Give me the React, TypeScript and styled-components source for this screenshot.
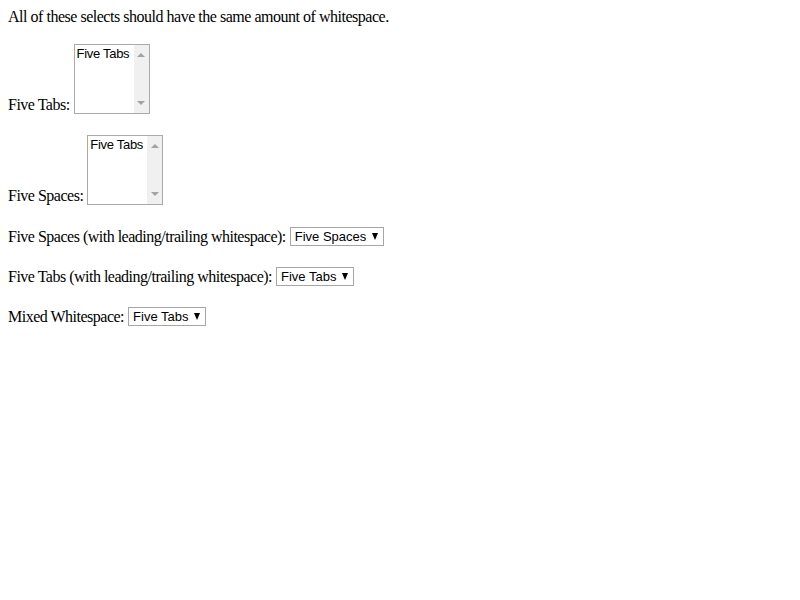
import React from "react";
import styled, { createGlobalStyle } from "styled-components";

const Global = createGlobalStyle`
  html, body { margin: 0; padding: 0; background: #fff; }
  body {
    padding: 8px;
    font-family: "Liberation Serif", "Times New Roman", serif;
    font-size: 16px;
    line-height: 18px;
    letter-spacing: -0.5px;
    color: #000;
  }
`;

const Intro = styled.div`
  height: 18px;
  letter-spacing: -0.48px;
`;

const Row = styled.div<{ $top: number; $align?: string }>`
  display: flex;
  align-items: ${(p) => p.$align || "flex-end"};
  margin-top: ${(p) => p.$top}px;
`;

const Label = styled.span`
  white-space: pre;
  margin-right: 4px;
`;

const ListBox = styled.div`
  box-sizing: border-box;
  width: 76px;
  height: 70px;
  border: 1px solid #a9a9a9;
  background: #fff;
  display: flex;
  font-family: "Liberation Sans", Arial, sans-serif;
  font-size: 13px;
  line-height: 15px;
  letter-spacing: -0.3px;
`;

const Options = styled.div`
  flex: 1;
  padding: 1px 0 0 2px;
  white-space: nowrap;
  overflow: hidden;
`;

const ScrollTrack = styled.div`
  width: 15px;
  background: #f0f0f0;
  display: flex;
  flex-direction: column;
  justify-content: space-between;
  align-items: center;
  padding: 8px 0 8px;
`;

const Arrow = styled.div<{ $up?: boolean }>`
  width: 0;
  height: 0;
  border-left: 4px solid transparent;
  border-right: 4px solid transparent;
  ${(p) =>
    p.$up
      ? "border-bottom: 4px solid #a3a3a3;"
      : "border-top: 4px solid #a3a3a3;"}
`;

const Drop = styled.div`
  box-sizing: border-box;
  height: 19px;
  border: 1px solid #a6a6a6;
  background: #fff;
  display: inline-flex;
  align-items: center;
  padding: 0 5px 0 4px;
  font-family: "Liberation Sans", Arial, sans-serif;
  font-size: 13px;
  line-height: 15px;
  letter-spacing: 0;
  white-space: nowrap;
`;

const Caret = styled.span`
  display: inline-block;
  width: 0;
  height: 0;
  margin-left: 6px;
  border-left: 3.5px solid transparent;
  border-right: 3.5px solid transparent;
  border-top: 7px solid #000;
`;

function List({ text }: { text: string }) {
  return (
    <ListBox>
      <Options>{text}</Options>
      <ScrollTrack>
        <Arrow $up />
        <Arrow />
      </ScrollTrack>
    </ListBox>
  );
}

function Select({ text }: { text: string }) {
  return (
    <Drop>
      {text}
      <Caret />
    </Drop>
  );
}

export default function App() {
  return (
    <>
      <Global />
      <Intro>All of these selects should have the same amount of whitespace.</Intro>
      <Row $top={18}>
        <Label>Five Tabs:</Label>
        <List text="Five Tabs" />
      </Row>
      <Row $top={21}>
        <Label>Five Spaces:</Label>
        <List text="Five Tabs" />
      </Row>
      <Row $top={22} $align="center">
        <Label>Five Spaces (with leading/trailing whitespace):</Label>
        <Select text="Five Spaces" />
      </Row>
      <Row $top={21} $align="center">
        <Label>Five Tabs (with leading/trailing whitespace):</Label>
        <Select text="Five Tabs" />
      </Row>
      <Row $top={21} $align="center">
        <Label>Mixed Whitespace:</Label>
        <Select text="Five Tabs" />
      </Row>
    </>
  );
}
